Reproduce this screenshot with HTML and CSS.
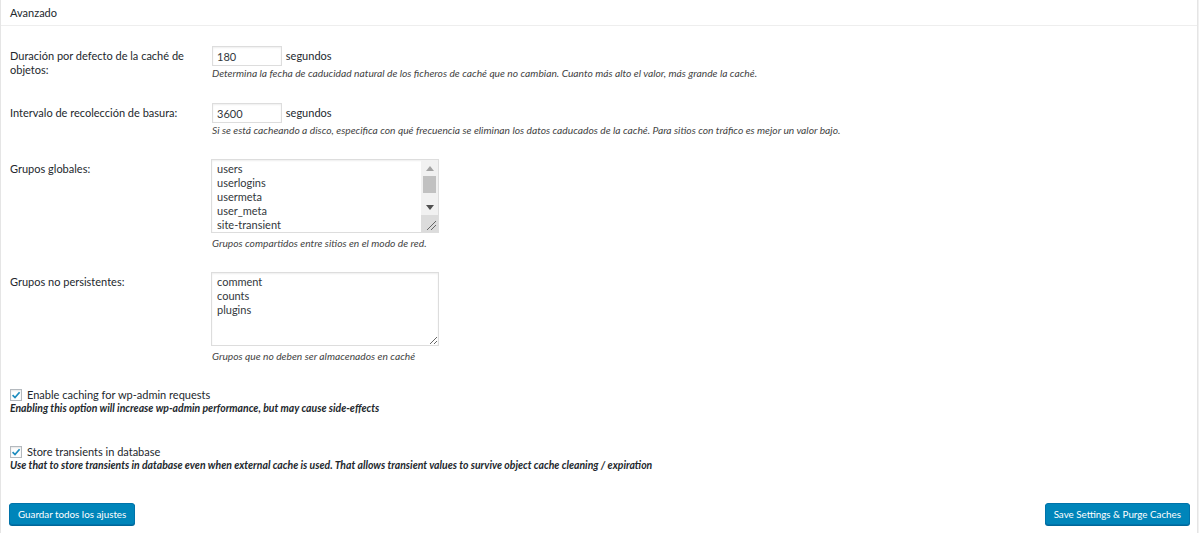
FILE: index.html
```html
<!DOCTYPE html>
<html lang="es">
<head>
  <meta charset="UTF-8" />
  <title>Avanzado</title>
  <meta name="viewport" content="width=device-width, initial-scale=1.0" />
  <link rel="stylesheet" href="styles.css">
</head>
<body>
  <div class="postbox">
    <h3 class="hndle">Avanzado</h3>

    <div class="inside">
      <div class="row first">
        <label class="row-label" for="lifetime">Duración por defecto de la caché de objetos:</label>
        <div class="field">
          <input type="text" class="small-text" id="lifetime" value="180"> <span class="unit">segundos</span>
          <p class="desc">Determina la fecha de caducidad natural de los ficheros de caché que no cambian. Cuanto más alto el valor, más grande la caché.</p>
        </div>
      </div>

      <div class="row">
        <label class="row-label" for="gc">Intervalo de recolección de basura:</label>
        <div class="field">
          <input type="text" class="small-text" id="gc" value="3600"> <span class="unit">segundos</span>
          <p class="desc">Si se está cacheando a disco, especifica con qué frecuencia se eliminan los datos caducados de la caché. Para sitios con tráfico es mejor un valor bajo.</p>
        </div>
      </div>

      <div class="row">
        <label class="row-label" for="global">Grupos globales:</label>
        <div class="field">
          <div class="ta-wrap">
            <textarea id="global" class="no-resize">users
userlogins
usermeta
user_meta
site-transient
site-options
site-lookup
blog-lookup
blog-details
rss
global-posts</textarea>
            <!-- drawn scrollbar, the headless browser hides native ones -->
            <div class="scrollbar">
              <div class="sb-btn">
                <svg width="8" height="5" viewBox="0 0 8 5"><path d="M0 5 L4 0 L8 5 Z" fill="#a3a3a3"/></svg>
              </div>
              <div class="sb-track"><div class="sb-thumb"></div></div>
              <div class="sb-btn">
                <svg width="8" height="5" viewBox="0 0 8 5"><path d="M0 0 L8 0 L4 5 Z" fill="#505050"/></svg>
              </div>
              <div class="sb-corner">
                <svg width="17" height="17" viewBox="0 0 17 17"><path d="M6 15 L15 6 M10 15 L15 10" stroke="#666" stroke-width="1"/></svg>
              </div>
            </div>
          </div>
          <p class="desc wide">Grupos compartidos entre sitios en el modo de red.</p>
        </div>
      </div>

      <div class="row">
        <label class="row-label" for="nonpersistent">Grupos no persistentes:</label>
        <div class="field">
          <div class="ta-wrap">
            <textarea id="nonpersistent">comment
counts
plugins</textarea>
          </div>
          <p class="desc wide">Grupos que no deben ser almacenados en caché</p>
        </div>
      </div>

      <div class="check-row">
        <label class="check">
          <span class="cb"><svg width="10" height="10" viewBox="0 0 10 10"><path d="M1.6 5.2 L4 7.6 L8.6 2.2" fill="none" stroke="#1e8cbe" stroke-width="1.7"/></svg></span>
          Enable caching for wp-admin requests
        </label>
        <p class="check-desc">Enabling this option will increase wp-admin performance, but may cause side-effects</p>
      </div>

      <div class="check-row second">
        <label class="check">
          <span class="cb"><svg width="10" height="10" viewBox="0 0 10 10"><path d="M1.6 5.2 L4 7.6 L8.6 2.2" fill="none" stroke="#1e8cbe" stroke-width="1.7"/></svg></span>
          Store transients in database
        </label>
        <p class="check-desc">Use that to store transients in database even when external cache is used. That allows transient values to survive object cache cleaning / expiration</p>
      </div>

      <div class="actions">
        <button type="button" class="btn">Guardar todos los ajustes</button>
        <button type="button" class="btn">Save Settings &amp; Purge Caches</button>
      </div>
    </div>
  </div>
</body>
</html>
```

FILE: styles.css
```css
* {
  box-sizing: border-box;
}

body {
  margin: 0;
  background: #f1f1f1;
  font-family: Lato, "Liberation Sans", sans-serif;
  font-size: 11px;
  color: #23282d;
}

.postbox {
  height: 533px;
  margin-right: 1px;
  background: #fff;
  border: 1px solid #e5e5e5;
  border-top: 0;
  border-bottom: 0;
}

.hndle {
  margin: 0;
  height: 26px;
  padding: 0 9px;
  border-bottom: 1px solid #eee;
  font-size: 11px;
  font-weight: normal;
  line-height: 26px;
}

.inside {
  padding: 20px 7px 0 9px;
}

.row {
  display: grid;
  grid-template-columns: 192px 1fr;
  column-gap: 10px;
  margin-bottom: 22px;
}

.row.first {
  margin-bottom: 23px;
}

.row-label {
  padding-top: 3px;
  line-height: 14px;
}

input[type="text"] {
  width: 70px;
  height: 20px;
  margin: 0 1px 0 0;
  padding: 0 4px;
  border: 1px solid #ddd;
  box-shadow: inset 0 1px 2px rgba(0,0,0,.07);
  font-family: inherit;
  font-size: 11px;
  color: #32373c;
  vertical-align: top;
}

.unit {
  line-height: 20px;
}

.desc {
  margin: 1px 0 0;
  font-size: 10.25px;
  font-style: italic;
  line-height: 13px;
  color: #444;
}

.desc.wide {
  margin-top: 4px;
}

.ta-wrap {
  position: relative;
  width: 228px;
  margin-left: -1px;
}

textarea {
  display: block;
  width: 228px;
  height: 74px;
  padding: 2px 5px;
  border: 1px solid #ddd;
  box-shadow: inset 0 1px 2px rgba(0,0,0,.07);
  font-family: inherit;
  font-size: 11px;
  line-height: 14px;
  color: #32373c;
}

textarea.no-resize {
  overflow: hidden;
  resize: none;
}

.scrollbar {
  position: absolute;
  top: 1px;
  right: 1px;
  bottom: 1px;
  width: 17px;
  display: flex;
  flex-direction: column;
  background: #f1f1f1;
}

.sb-btn {
  height: 16px;
  display: flex;
  align-items: center;
  justify-content: center;
}

.sb-track {
  flex: 1;
  padding: 0 2px;
}

.sb-thumb {
  height: 17px;
  background: #c1c1c1;
}

.sb-corner {
  height: 17px;
  background: #dcdcdc;
}

.sb-corner svg {
  display: block;
}

/* collapses with the 22px under the last row */
.check-row {
  margin-top: 25px;
}

.check-row.second {
  margin-top: 30px;
}

.check {
  display: flex;
  align-items: center;
  height: 14px;
  line-height: 14px;
}

.cb {
  display: inline-flex;
  align-items: center;
  justify-content: center;
  width: 12px;
  height: 12px;
  margin-right: 5px;
  border: 1px solid #b4b9be;
  background: #fff;
  box-shadow: inset 0 1px 2px rgba(0,0,0,.1);
}

.check-desc {
  margin: 0;
  font-size: 10.45px;
  font-style: italic;
  font-weight: bold;
  line-height: 13px;
}

.actions {
  display: flex;
  justify-content: space-between;
  margin: 31px 0 0 -1px;
}

.btn {
  height: 22px;
  padding: 0 8px;
  background: #0085ba;
  border: 1px solid #0073aa;
  border-radius: 3px;
  box-shadow: 0 1px 0 #006799;
  color: #fff;
  font-family: inherit;
  font-size: 9.8px;
  cursor: pointer;
}

.btn:hover {
  background: #008ec2;
}
```
